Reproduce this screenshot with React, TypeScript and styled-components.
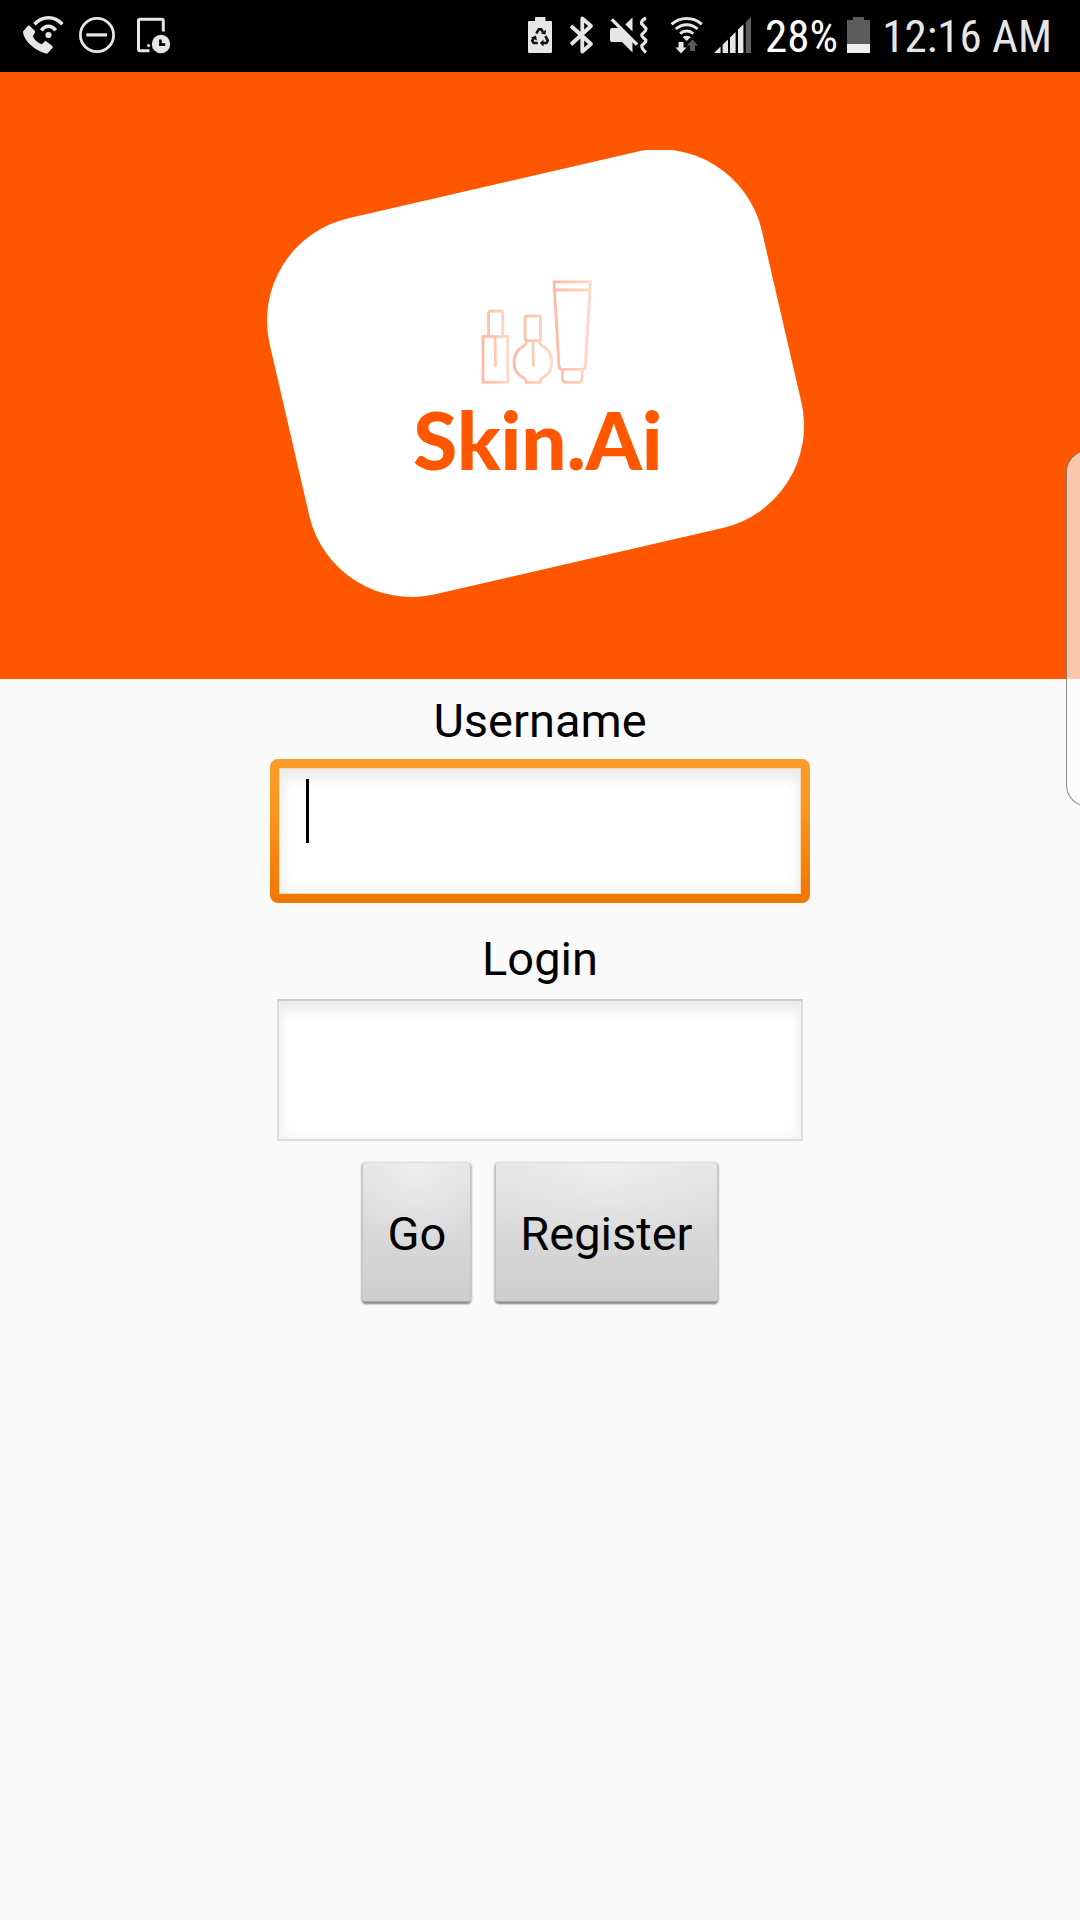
import React from "react";
import styled, { createGlobalStyle } from "styled-components";

const GlobalStyle = createGlobalStyle`
  *, *::before, *::after { box-sizing: border-box; }
  body {
    margin: 0;
    background: #fafafa;
    color: #000;
    font-family: Roboto, "Liberation Sans", sans-serif;
  }
`;

const Screen = styled.div`
  position: relative;
  min-height: 100vh;
  display: flex;
  flex-direction: column;
`;

const StatusBar = styled.header`
  display: flex;
  justify-content: space-between;
  align-items: center;
  height: 72px;
  padding: 0 28px 0 20px;
  background: #000;
`;

const StatusGroup = styled.div<{ $gap: number }>`
  display: flex;
  align-items: center;
  gap: ${(p) => p.$gap}px;
`;

const Glyph = styled.svg`
  display: block;
  height: 48px;
  overflow: visible;
  fill: #e6e6e6;
  stroke: none;
`;

const StatusText = styled.span<{ $width: number; $color: string }>`
  min-width: ${(p) => p.$width}px;
  padding-top: 2px;
  text-align: right;
  white-space: nowrap;
  font-family: "Roboto Condensed", "Liberation Sans Narrow", Roboto, sans-serif;
  font-size: 45px;
  line-height: 48px;
  color: ${(p) => p.$color};
`;

const Banner = styled.svg`
  display: block;
  width: 100%;
  height: auto;
  background: #ff5700;
`;

const BannerText = styled.text`
  font-family: Lato, sans-serif;
  font-weight: 900;
  font-size: 80px;
  fill: #ff5700;
`;

const Form = styled.form`
  display: flex;
  flex-direction: column;
  align-items: center;
  padding-top: 12px;
`;

const Field = styled.div`
  display: flex;
  flex-direction: column;
  align-items: center;
  width: 50%;

  & + & { margin-top: 26px; }
`;

const Label = styled.label`
  font-size: 47px;
  line-height: 60px;
  margin-bottom: 8px;
`;

const InputFrame = styled.div<{ $focused?: boolean }>`
  position: relative;
  width: 100%;
  height: 144px;
  padding: ${(p) => (p.$focused ? "9px" : "2px 7px 0")};
  border-radius: 8px;
  background: ${(p) =>
    p.$focused ? "linear-gradient(#fc9d2b, #fa9520 40%, #f27805 92%)" : "none"};
`;

const Input = styled.input<{ $focused?: boolean }>`
  display: block;
  width: 100%;
  height: 100%;
  padding: 0 27px;
  border: ${(p) => (p.$focused ? "1px solid #fbd9ae" : "2px solid #dedede")};
  border-top-color: ${(p) => (p.$focused ? "#fbd9ae" : "#cbcbcb")};
  border-radius: 0;
  outline: none;
  background: #fff;
  box-shadow: inset 0 12px 16px -4px #eaeaea, inset 0 0 16px #f2f2f2;
  font: inherit;
  font-size: 47px;
`;

const Caret = styled.span`
  position: absolute;
  top: 20px;
  left: 36px;
  width: 3px;
  height: 64px;
  background: #000;
`;

const Actions = styled.div`
  display: flex;
  gap: 24px;
  margin-top: 21px;
`;

const Button = styled.button`
  height: 140px;
  padding: 4px 24px 0;
  border: 1px solid #c4c4c4;
  border-top-color: #dcdcdc;
  border-bottom-color: #a8a8a8;
  border-radius: 4px;
  background:
    radial-gradient(ellipse 60% 70% at 50% 0, rgba(255, 255, 255, 0.35), transparent),
    linear-gradient(#e6e6e6, #dadada 45%, #cecece);
  box-shadow: 0 2px 2px #8c8c8c, 0 1px 3px #b4b4b4;
  color: #000;
  font: inherit;
  font-size: 47px;
  line-height: 60px;
`;

const EdgeHandle = styled.div`
  position: absolute;
  top: 450px;
  right: 0;
  width: 14px;
  height: 357px;
  overflow: hidden;

  &::before {
    content: "";
    display: block;
    width: 44px;
    height: 100%;
    border: 1px solid rgba(60, 60, 60, 0.6);
    border-radius: 22px;
    background: rgba(250, 250, 250, 0.69);
  }
`;

const WifiCall = () => (
  <Glyph viewBox="20 12 46 48" width="46" aria-hidden="true">
    <path d="M23 31.5 L28 25.8 Q29 25 30 26 L35 31 Q35.5 32 32.8 36.5 Q36 42.5 41.8 44.2 L44.5 41.4 Q45.5 40.5 46.5 41.4 L52.4 46 Q53.2 47 52.4 48 L48 53 Q47 54 45.8 53.6 Q37 51 30 44.5 Q24 38.5 23 32.5Z" />
    <circle cx="48.5" cy="35" r="3.1" />
    <path d="M34.5 24.3 Q40.5 17.8 48.5 17.8 T62.3 24.3" fill="none" stroke="#e6e6e6" strokeWidth="3.6" />
    <path d="M41.3 30.3 Q44.3 26.3 48.5 26.3 T55.7 30.3" fill="none" stroke="#e6e6e6" strokeWidth="3.6" />
  </Glyph>
);

const DoNotDisturb = () => (
  <Glyph viewBox="80 12 34 48" width="34" aria-hidden="true">
    <circle cx="97" cy="35" r="16.6" fill="none" stroke="#e6e6e6" strokeWidth="2.8" />
    <rect x="86.3" y="33.3" width="20.7" height="3.2" />
  </Glyph>
);

const TabletClock = () => (
  <Glyph viewBox="128 12 42 48" width="42" aria-hidden="true">
    <path d="M163.3 31.5 V21 Q163.3 19.3 161.6 19.3 H140.3 Q138.5 19.3 138.5 21 V49 Q138.5 50.8 140.3 50.8 H149.5" fill="none" stroke="#e6e6e6" strokeWidth="3" />
    <circle cx="148.6" cy="45.6" r="1.5" />
    <circle cx="161" cy="44" r="9.2" />
    <path d="M160.4 39.5 V44.6 H165.2" fill="none" stroke="#000" strokeWidth="2.6" />
  </Glyph>
);

const BatteryRecycle = () => (
  <Glyph viewBox="526 12 31 48" width="31" aria-hidden="true">
    <path d="M529 21 H535 V18 Q535 17 536 17 H544.5 Q545.5 17 545.5 18 V21 H551 Q552 21 552 22 V51.5 Q552 53 550.5 53 H529.5 Q528 53 528 51.5 V22 Q528 21 529 21Z" />
    <g fill="none" stroke="#111" strokeWidth="2.6">
      <path d="M536.3 33.5 L538.8 29.3 H541.2 L543 32" />
      <path d="M545.3 36 L547.8 40.5 L546.4 43 H542.6" />
      <path d="M537.8 43 H533.6 L532.2 40.5 L534 37.6" />
    </g>
    <path fill="#111" d="M540.6 33.6 L545.6 34.4 L546 29.8Z M543.6 39.4 V46.4 L539.8 43Z M531 37.6 L536 35.4 L537 40.4Z" />
  </Glyph>
);

const Bluetooth = () => (
  <Glyph viewBox="565 12 32 48" width="32" aria-hidden="true">
    <path d="M571 26 L591 44 L582.3 51.6 V18.4 L591 26 L571 44.5" fill="none" stroke="#e6e6e6" strokeWidth="3.8" strokeLinejoin="round" />
  </Glyph>
);

const MuteVibrate = () => (
  <Glyph viewBox="605 12 49 48" width="49" aria-hidden="true">
    <path d="M632.5 17.5 V31.5 L625.3 24.6Z" />
    <path d="M612 28 H619.5 L632.5 42 V52.5 L622 42 H612 Q610 42 610 40 V30 Q610 28 612 28Z" />
    <path d="M611.8 19.4 L637 44.6" stroke="#e6e6e6" strokeWidth="3.4" />
    <path d="M646 18 Q641 20.5 641.5 23.5 L646 28.5 Q646.5 30.5 641.8 34.5 Q641 36 645.8 40 Q646.5 42 641.8 45.5 Q641.5 48.5 646 52.5" fill="none" stroke="#e6e6e6" strokeWidth="3.2" />
  </Glyph>
);

const WifiTraffic = () => (
  <Glyph viewBox="662 12 42 48" width="42" aria-hidden="true">
    <g fill="none" stroke="#e6e6e6" strokeWidth="3">
      <path d="M671.6 24.4 A22.5 22.5 0 0 1 701.8 24.4" />
      <path d="M675.8 29 A16 16 0 0 1 697.6 29" />
      <path d="M680.2 33.6 A9.6 9.6 0 0 1 693.2 33.6" />
    </g>
    <path d="M682.6 37 Q686.7 34.4 690.8 37 L686.7 41Z" />
    <path d="M678.5 42 H683.5 V47.5 H686.5 L681 53.5 L675.5 47.5 H678.5Z" />
    <path fill="#5c5c5c" d="M690 51 V45.5 H687 L692.5 39.5 L698 45.5 H695 V51Z" />
  </Glyph>
);

const Signal = () => (
  <Glyph viewBox="712 12 40 48" width="40" aria-hidden="true">
    <path d="M714 53 L720.6 46.6 V53Z M722.6 44.7 L728 39.4 V53 H722.6Z M730 37.5 L735.6 32 V53 H730Z M738 29.6 L743.4 24.4 V53 H738Z" />
    <path fill="#5c5c5c" d="M745.8 22 L751 17 V53 H745.8Z" />
  </Glyph>
);

const Battery = () => (
  <Glyph viewBox="846 12 26 48" width="26" aria-hidden="true">
    <path fill="#5c5c5c" d="M847 20 H853 V17 H864 V20 H870 V44 H847Z" />
    <rect x="847" y="44" width="23" height="9" fill="#eee" />
  </Glyph>
);

const LogoBanner = () => (
  <Banner viewBox="0 0 1080 607" role="img" aria-label="Skin.Ai">
    <defs>
      <clipPath id="plate">
        <rect x="267" y="78" width="537" height="448" />
      </clipPath>
      <linearGradient id="ink1" gradientUnits="userSpaceOnUse" x1="482" y1="0" x2="509" y2="0">
        <stop offset="0" stopColor="#ffb9a0" />
        <stop offset="1" stopColor="#ffd9c8" />
      </linearGradient>
      <linearGradient id="ink2" gradientUnits="userSpaceOnUse" x1="514" y1="0" x2="552" y2="0">
        <stop offset="0" stopColor="#ffb9a0" />
        <stop offset="1" stopColor="#ffd9c8" />
      </linearGradient>
      <linearGradient id="ink3" gradientUnits="userSpaceOnUse" x1="553" y1="0" x2="592" y2="0">
        <stop offset="0" stopColor="#ffb9a0" />
        <stop offset="1" stopColor="#ffd9c8" />
      </linearGradient>
    </defs>
    <g clipPath="url(#plate)">
      <rect x="283" y="108" width="505" height="386" rx="105" fill="#fff" transform="rotate(-13 536 301)" />
    </g>
    <g fill="none" strokeWidth="2.8">
      <g stroke="url(#ink1)">
        <rect x="483" y="264.5" width="24.8" height="45.8" />
        <path d="M488.6 264 V241.5 Q488.6 239 491 239 H500.4 Q502.8 239 502.8 241.5 V264" />
        <path d="M495 265 L495.6 294.7" />
      </g>
      <g stroke="url(#ink2)">
        <rect x="525" y="244" width="15.4" height="24.6" rx="2.5" />
        <path d="M526.4 269 Q526.6 272 523.5 274 C511 281 511 300 523 305.6 Q526.3 307.4 526.3 310.3 H540 Q540 307.4 542.6 305.6 C555 299 555 281 542.4 274 Q539.6 272 539.6 269" />
        <path d="M532.8 269 L533.4 294.7" />
      </g>
      <g stroke="url(#ink3)">
        <path d="M554 209.8 H590.4 L585.4 294.5 Q585 297.3 582.6 297.3 H561.8 Q559.4 297.3 559 294.5Z" />
        <path d="M554.2 218 H590" />
        <path d="M562.4 297.5 V307 Q562.8 310.3 566 310.3 H578.6 Q581.6 310.3 582 307 L582.4 297.5" />
      </g>
    </g>
    <BannerText x="538" y="398" textAnchor="middle">Skin.Ai</BannerText>
  </Banner>
);

export default function App() {
  return (
    <Screen>
      <GlobalStyle />
      <StatusBar>
        <StatusGroup $gap={14}>
          <WifiCall />
          <DoNotDisturb />
          <TabletClock />
        </StatusGroup>
        <StatusGroup $gap={8}>
          <BatteryRecycle />
          <Bluetooth />
          <MuteVibrate />
          <WifiTraffic />
          <Signal />
          <StatusText $width={78} $color="#fff">28%</StatusText>
          <Battery />
          <StatusText $width={172} $color="#e6e6e6">12:16 AM</StatusText>
        </StatusGroup>
      </StatusBar>
      <LogoBanner />
      <Form onSubmit={(e) => e.preventDefault()}>
        <Field>
          <Label htmlFor="username">Username</Label>
          <InputFrame $focused>
            <Input id="username" type="text" $focused />
            <Caret aria-hidden="true" />
          </InputFrame>
        </Field>
        <Field>
          <Label htmlFor="login">Login</Label>
          <InputFrame>
            <Input id="login" type="text" />
          </InputFrame>
        </Field>
        <Actions>
          <Button type="submit">Go</Button>
          <Button type="button">Register</Button>
        </Actions>
      </Form>
      <EdgeHandle aria-hidden="true" />
    </Screen>
  );
}
